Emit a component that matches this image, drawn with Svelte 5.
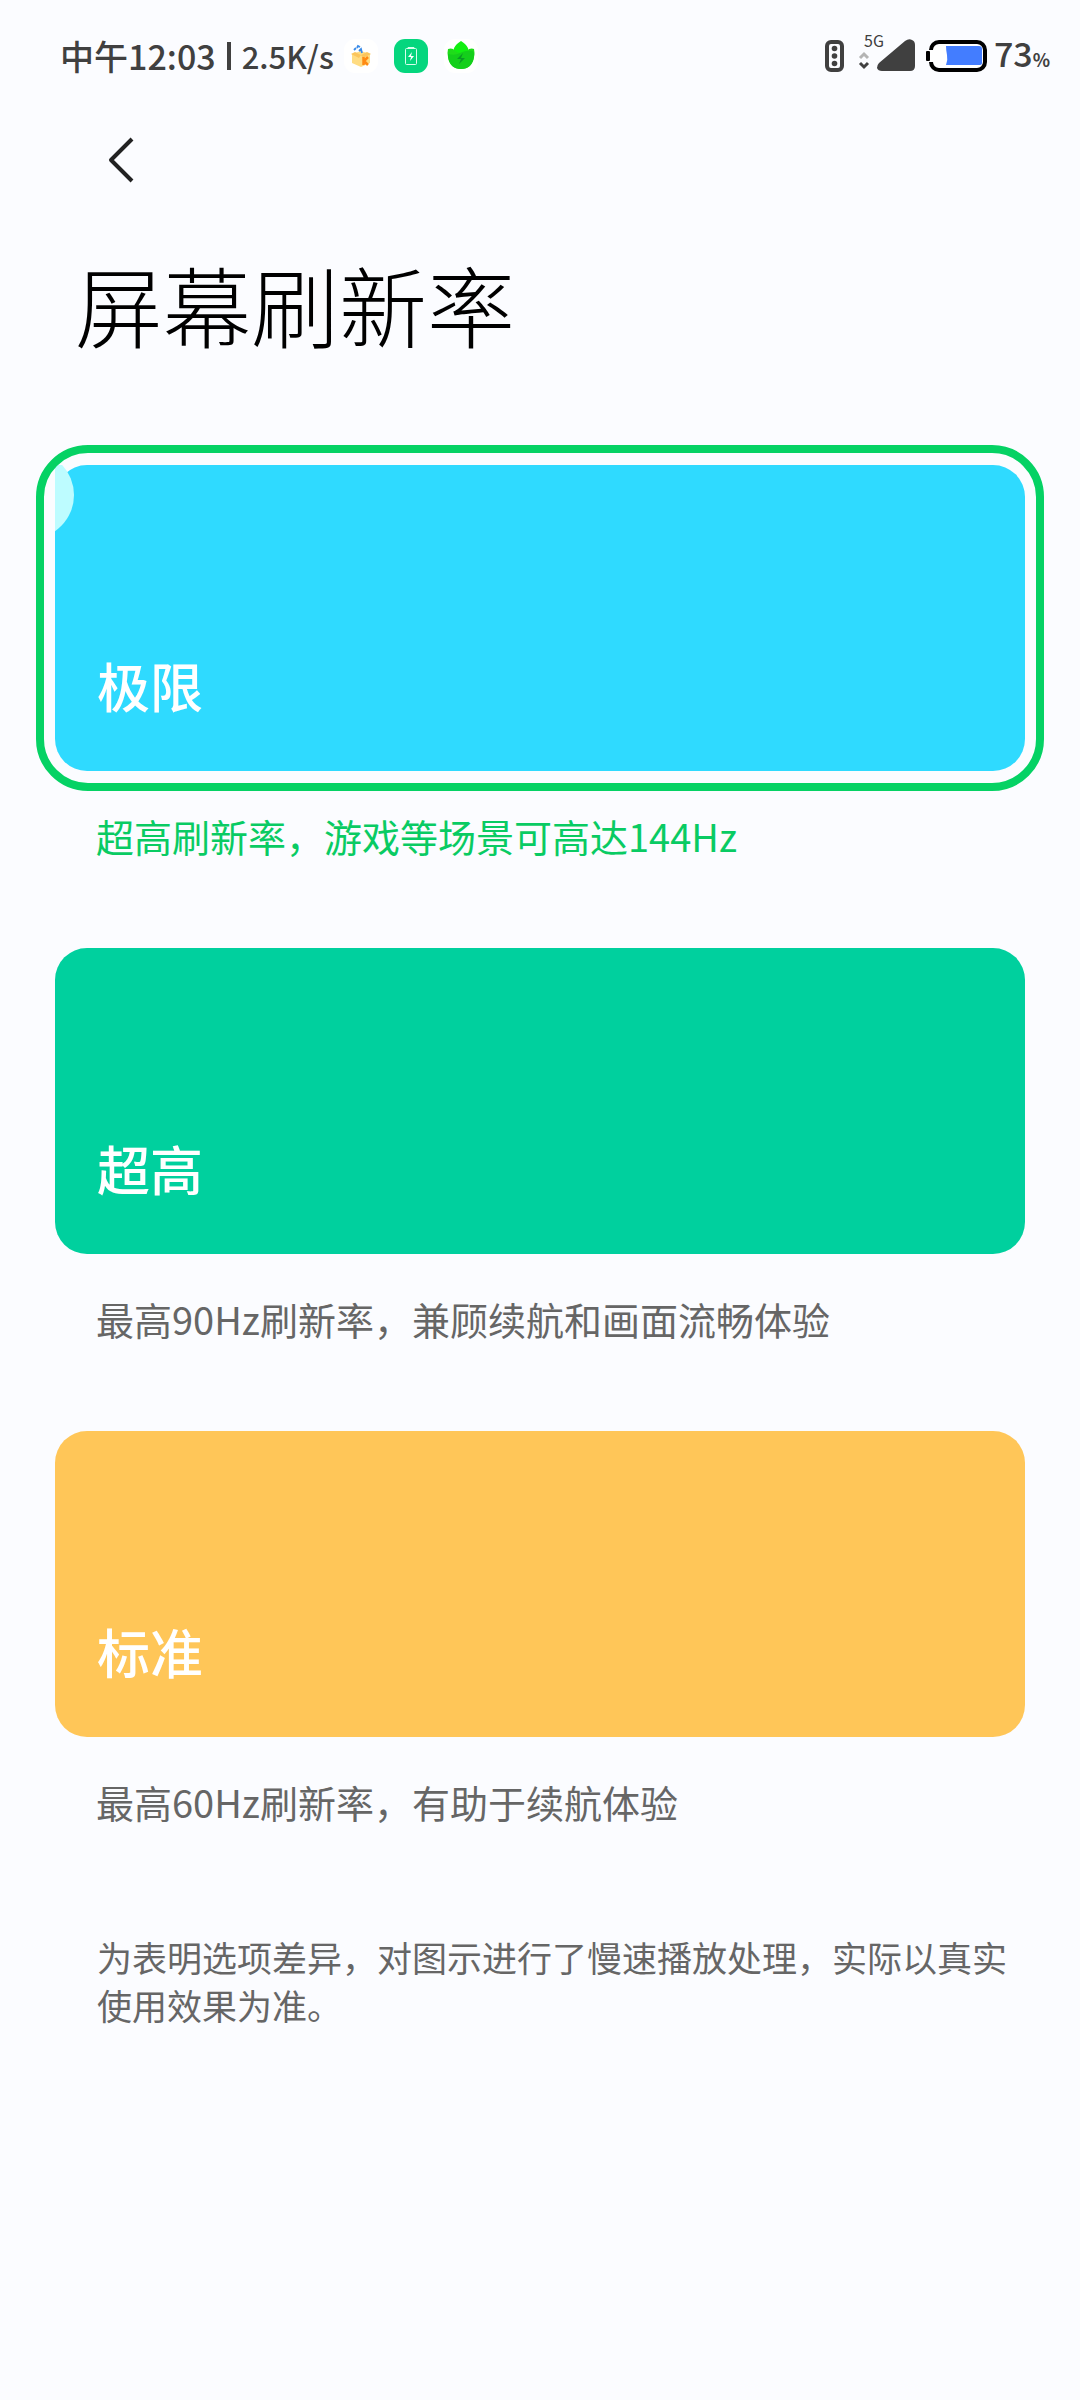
<script lang="ts">
	type RefreshMode = {
		id: string;
		name: string;
		description: string;
	};

	const modes: RefreshMode[] = [
		{ id: 'extreme', name: '极限', description: '超高刷新率，游戏等场景可高达144Hz' },
		{ id: 'high', name: '超高', description: '最高90Hz刷新率，兼顾续航和画面流畅体验' },
		{ id: 'standard', name: '标准', description: '最高60Hz刷新率，有助于续航体验' }
	];

	let selected = $state('extreme');
</script>

<div class="screen">
	<header class="status-bar">
		<div class="status-left">
			<span class="clock">中午12:03</span>
			<span class="divider"></span>
			<span class="speed">2.5K/s</span>
			<svg class="app-icon" width="34" height="34" viewBox="0 0 34 34" aria-hidden="true">
				<rect width="34" height="34" rx="11" fill="#fff" />
				<path d="M8 15l9-3 9 3v9l-9 4-9-4z" fill="#ffdc82" />
				<path d="M7 15l4-2 6 3-2 3zM27 15l-4-2-6 3 2 3z" fill="#fbc55c" />
				<path d="M19.500 18v8M24 18l-4 4 4 4" fill="none" stroke="#ff8a12" stroke-width="2.500" />
				<path d="M10 11l2-2M13 9l1-2 2 1M15 12l2-2 1 4" fill="none" stroke="#3a8be8" stroke-width="1.800" />
			</svg>
			<svg class="app-icon" width="34" height="34" viewBox="0 0 34 34" aria-hidden="true">
				<rect width="34" height="34" rx="11" fill="#05d67e" />
				<path d="M14 9.500V8.500h6v1" fill="none" stroke="#d8ffec" />
				<rect x="11.500" y="9.500" width="11" height="16" rx="1" fill="none" stroke="#d8ffec" />
				<path d="M18 13l-4 5h3l-1 4 4-5h-3z" fill="#fff" />
			</svg>
			<svg class="app-icon" width="34" height="34" viewBox="0 0 34 34" aria-hidden="true">
				<rect width="34" height="34" rx="11" fill="#fff" />
				<path d="M17 2c5 3 8 7 8 12H9c0-5 3-9 8-12z" fill="#12ee12" />
				<path d="M4 10q3-1 5 0 3 4 8 4 6 0 8-4 3-1 5 0 1 4 0 8-2 12-13 12T4 18q-1-4 0-8z" fill="#1fdc1a" />
				<path d="M4 15q7 2 12-1 6-3 13-2 2 3 1 6-2 12-13 12T4 18z" fill="#14cf1b" />
				<path d="M19 14l-6 6h4l-2 5 6-6h-4z" fill="#0a9a25" />
			</svg>
		</div>
		<div class="status-right">
			<svg width="19" height="32" viewBox="0 0 19 32" aria-hidden="true">
				<rect x="2" y="2" width="15" height="28" rx="4" fill="none" stroke="#404040" stroke-width="4" />
				<circle cx="9.500" cy="8.500" r="2.800" fill="#404040" />
				<circle cx="9.500" cy="16" r="2.800" fill="#404040" />
				<circle cx="9.500" cy="23.500" r="2.800" fill="#404040" />
			</svg>
			<svg class="signal" width="58" height="48" viewBox="0 0 58 48" role="img" aria-label="5G">
				<text x="6" y="21" class="network">5G</text>
				<path d="M2 32l4-4 4 4" fill="none" stroke="#b4b4b4" stroke-width="3" />
				<path d="M2 37l4 4 4-4" fill="none" stroke="#404040" stroke-width="3" />
				<path d="M21 37L47 15q4-3 7-1 3 1 3 5v21q0 5-5 5H24q-4 0-5-3 0-3 2-5z" fill="#404040" />
			</svg>
			<svg width="62" height="32" viewBox="0 0 62 32" aria-hidden="true">
				<rect x="5" y="2" width="54" height="28" rx="8" fill="#fff" stroke="#000" stroke-width="4" />
				<path d="M2 10h7v12H2z" fill="#fff" />
				<rect x="0" y="11" width="4" height="10" rx="1" />
				<path d="M20 6h33q3 0 3 3v14q0 2-3 2H20q2-5 1-10t-1-9z" fill="#437dff" />
			</svg>
			<span class="level">73<small>%</small></span>
		</div>
	</header>

	<nav class="toolbar">
		<button type="button" class="back" aria-label="返回">
			<svg width="28" height="48" viewBox="0 0 28 48" aria-hidden="true">
				<path d="M25 3L4 24l21 21" fill="none" stroke="#222" stroke-width="4" stroke-linejoin="round" />
			</svg>
		</button>
	</nav>

	<main>
		<h1>屏幕刷新率</h1>

		<div class="modes" role="radiogroup" aria-label="屏幕刷新率">
			{#each modes as mode (mode.id)}
				<label class="mode" class:selected={selected === mode.id}>
					<input type="radio" name="refresh-mode" value={mode.id} bind:group={selected} />
					<span class="card {mode.id}">
						{#if selected === mode.id}
							<svg class="bubble" width="20" height="68" viewBox="0 0 20 68" aria-hidden="true">
								<circle cx="-25" cy="30" r="44" fill="#bdfcff" />
							</svg>
						{/if}
						<span class="name">{mode.name}</span>
					</span>
					<span class="description">{mode.description}</span>
				</label>
			{/each}
		</div>

		<p class="note">为表明选项差异，对图示进行了慢速播放处理，实际以真实使用效果为准。</p>
	</main>
</div>

<style>
	:global(body) {
		background: #fbfcff;
	}

	.screen {
		min-height: 100vh;
		background: #fbfcff;
		color: #666;
		font-family: 'Noto Sans CJK SC', sans-serif;
	}

	.status-bar {
		display: flex;
		align-items: center;
		justify-content: space-between;
		height: 111px;
		padding: 0 30px 0 60px;
		box-sizing: border-box;
		color: #404040;
		font-weight: 500;
	}

	.status-left,
	.status-right {
		display: flex;
		align-items: center;
	}

	.clock,
	.level {
		font-size: 34px;
		line-height: 48px;
	}

	.divider {
		width: 4px;
		height: 28px;
		margin: 0 11px;
		background: #404040;
	}

	.speed {
		font-size: 31px;
		line-height: 48px;
	}

	.app-icon {
		margin-left: 16px;
	}

	.app-icon:first-of-type {
		margin-left: 10px;
	}

	.signal {
		margin: 0 10px 12px 14px;
	}

	.network {
		font-size: 16px;
		font-weight: 400;
		fill: #404040;
	}

	.level {
		margin-left: 6px;
	}

	small {
		font-size: 18px;
		font-weight: 700;
	}

	.toolbar {
		display: flex;
		height: 98px;
		padding: 0 80px;
		align-items: center;
	}

	.back {
		display: flex;
		padding: 0 27px;
		border: none;
		background: none;
		cursor: pointer;
	}

	main {
		padding: 0 55px;
	}

	h1 {
		margin: 0;
		padding: 32px 20px 100px;
		color: #000;
		font-size: 88px;
		font-weight: 200;
		line-height: 124px;
	}

	.modes {
		display: flex;
		flex-direction: column;
		gap: 84px;
	}

	.mode {
		display: block;
		position: relative;
		cursor: pointer;
	}

	input {
		position: absolute;
		opacity: 0;
	}

	.card {
		display: flex;
		position: relative;
		align-items: flex-end;
		height: 306px;
		padding: 0 42px 48px;
		box-sizing: border-box;
		border-radius: 32px;
	}

	.selected .card::after {
		content: '';
		position: absolute;
		inset: -20px -19px;
		border: 8px solid #05d264;
		border-radius: 52px;
	}

	.extreme {
		background: #2fdaff;
	}

	.high {
		background: #00d09e;
	}

	.standard {
		background: #ffc658;
	}

	.bubble {
		position: absolute;
		top: 0;
		left: 0;
	}

	.name {
		color: #fff;
		font-size: 53px;
		font-weight: 500;
		line-height: 76px;
	}

	.description {
		display: block;
		padding: 36px 41px 0;
		font-size: 38px;
		line-height: 57px;
	}

	.selected .description {
		color: #09cb63;
	}

	.note {
		margin: 0;
		padding: 103px 0 0 42px;
		font-size: 35px;
		line-height: 48px;
	}
</style>
